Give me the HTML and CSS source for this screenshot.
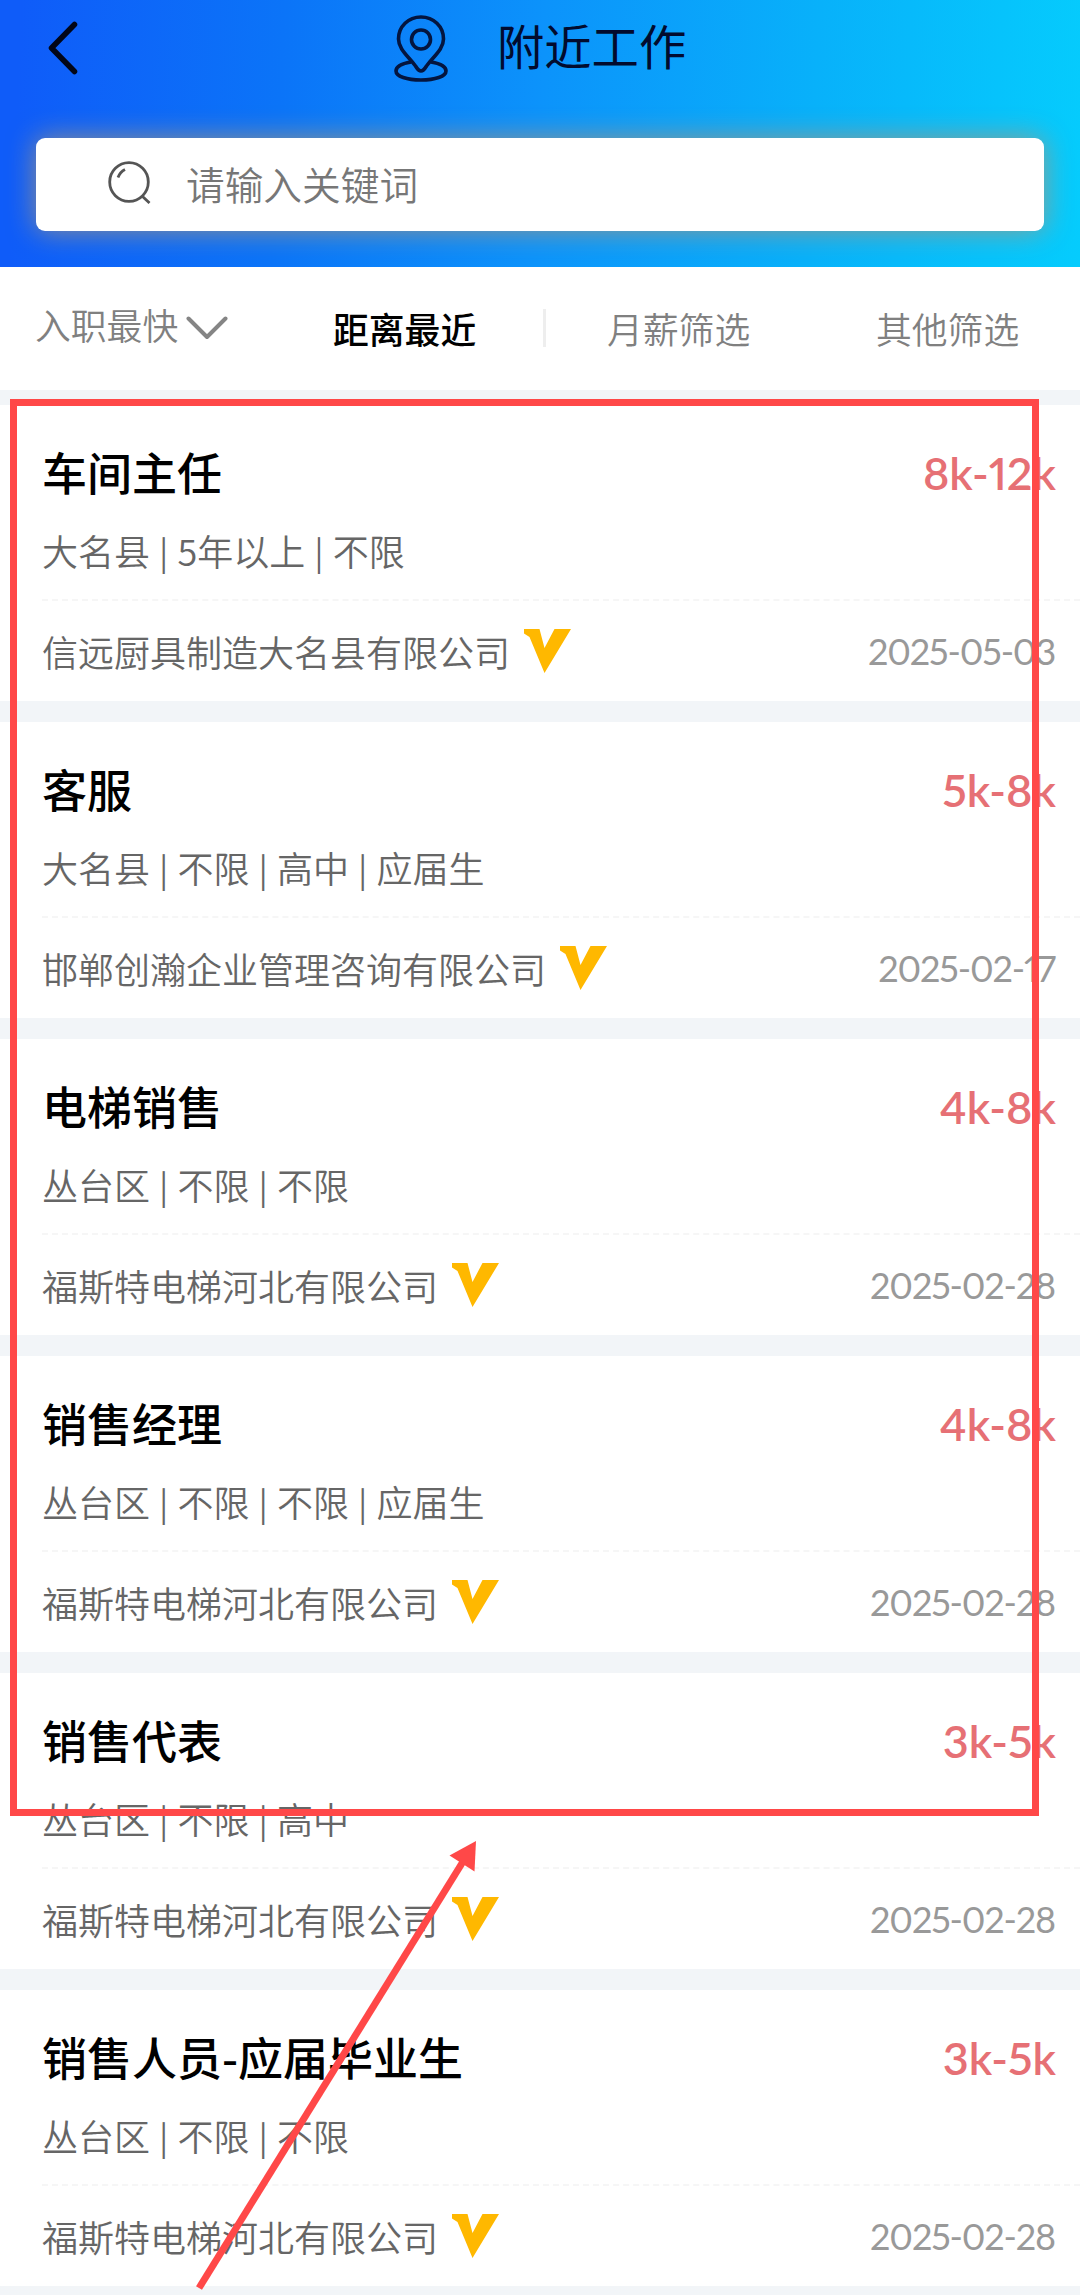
FILE: index.html
```html
<!DOCTYPE html>
<html lang="zh-CN">
<head>
<meta charset="utf-8">
<title>附近工作</title>
<link rel="stylesheet" href="styles.css">
</head>
<body>
<svg class="defs" width="0" height="0" aria-hidden="true">
  <symbol id="verified" viewBox="0 0 47 44"><path d="M0 0H15.500L20.500 19L30.500 0H47L20.500 44L5.500 8L0 4.500Z" fill="#ffb800"/></symbol>
</svg>
<div class="screen">
  <header class="header">
    <div class="titlebar">
      <svg class="back" viewBox="0 0 30 54"><path d="M26.500 3.500L3.500 27L26.500 50.500" fill="none" stroke="#020617" stroke-width="5.500" stroke-linecap="round" stroke-linejoin="round"/></svg>
      <div class="heading">
        <svg class="pin" viewBox="0 0 54 67" fill="none" stroke="#04153f" stroke-width="3.600" stroke-linejoin="round"><path d="M27 56C24.500 56 23 53.500 21.500 51C14 41 4.500 34 4.500 24C4.500 11.500 14.500 2 27 2S49.500 11.500 49.500 24C49.500 34 40 41 32.500 51C31 53.500 29.500 56 27 56Z"/><circle cx="27" cy="24.500" r="9.500"/><path d="M17 47C8 48.500 2 51.500 2 56C2 61.500 13 65 27 65S52 61.500 52 56C52 51.500 46 48.500 37 47"/></svg>
        <h1 class="title">附近工作</h1>
      </div>
    </div>
    <div class="search">
      <svg class="glass" viewBox="0 0 43 43" fill="none" stroke="#555" stroke-width="2.800"><circle cx="21" cy="21" r="19.300"/><path d="M34 35L41.500 42M10 16.500Q12 11 17 8.500"/></svg>
      <span class="placeholder">请输入关键词</span>
    </div>
  </header>
  <nav class="tabs">
    <div class="tab tab-sort">入职最快<svg class="chevron" viewBox="0 0 42 24"><path d="M2.500 2.500L21 21L39.500 2.500" fill="none" stroke="#858585" stroke-width="4" stroke-linecap="round" stroke-linejoin="round"/></svg></div>
    <div class="tab tab-active">距离最近</div>
    <div class="divider"></div>
    <div class="tab tab-salary">月薪筛选</div>
    <div class="tab">其他筛选</div>
  </nav>
  <main class="list">
    <article class="card">
      <div class="row"><h2 class="job">车间主任</h2><span class="salary">8k-12k</span></div>
      <p class="meta">大名县<i>|</i>5年以上<i>|</i>不限</p>
      <div class="foot"><span class="company">信远厨具制造大名县有限公司</span><svg class="badge"><use href="#verified"/></svg><time class="date">2025-05-03</time></div>
    </article>
    <article class="card">
      <div class="row"><h2 class="job">客服</h2><span class="salary">5k-8k</span></div>
      <p class="meta">大名县<i>|</i>不限<i>|</i>高中<i>|</i>应届生</p>
      <div class="foot"><span class="company">邯郸创瀚企业管理咨询有限公司</span><svg class="badge"><use href="#verified"/></svg><time class="date">2025-02-17</time></div>
    </article>
    <article class="card">
      <div class="row"><h2 class="job">电梯销售</h2><span class="salary">4k-8k</span></div>
      <p class="meta">丛台区<i>|</i>不限<i>|</i>不限</p>
      <div class="foot"><span class="company">福斯特电梯河北有限公司</span><svg class="badge"><use href="#verified"/></svg><time class="date">2025-02-28</time></div>
    </article>
    <article class="card">
      <div class="row"><h2 class="job">销售经理</h2><span class="salary">4k-8k</span></div>
      <p class="meta">丛台区<i>|</i>不限<i>|</i>不限<i>|</i>应届生</p>
      <div class="foot"><span class="company">福斯特电梯河北有限公司</span><svg class="badge"><use href="#verified"/></svg><time class="date">2025-02-28</time></div>
    </article>
    <article class="card">
      <div class="row"><h2 class="job">销售代表</h2><span class="salary">3k-5k</span></div>
      <p class="meta">丛台区<i>|</i>不限<i>|</i>高中</p>
      <div class="foot"><span class="company">福斯特电梯河北有限公司</span><svg class="badge"><use href="#verified"/></svg><time class="date">2025-02-28</time></div>
    </article>
    <article class="card">
      <div class="row"><h2 class="job">销售人员-应届毕业生</h2><span class="salary">3k-5k</span></div>
      <p class="meta">丛台区<i>|</i>不限<i>|</i>不限</p>
      <div class="foot"><span class="company">福斯特电梯河北有限公司</span><svg class="badge"><use href="#verified"/></svg><time class="date">2025-02-28</time></div>
    </article>
  </main>
  <svg class="annotation" viewBox="0 0 1080 2295">
    <rect x="13.500" y="402.500" width="1022" height="1410" fill="none" stroke="#ff4848" stroke-width="7"/>
    <path d="M199 2288L464 1860" stroke="#ff4848" stroke-width="7"/>
    <path d="M476 1841L449.500 1855.500L474.500 1871.500Z" fill="#ff4848"/>
  </svg>
</div>
</body>
</html>
```
FILE: styles.css
```css
* { box-sizing: border-box; margin: 0; padding: 0; }
body {
  width: 1080px;
  height: 2295px;
  overflow: hidden;
  background: #f2f5f8;
  font-family: "Noto Sans CJK SC", sans-serif;
  font-weight: 350;
}
svg { display: block; flex: none; }
.defs { position: absolute; }
.screen { position: relative; width: 1080px; height: 2295px; overflow: hidden; }

.header {
  height: 267px;
  padding: 0 36px;
  background: linear-gradient(93deg, #0f5cf9 2%, #0b74f8 26%, #0c93fb 50%, #08b1fa 75%, #05ccfd 100%);
}
.titlebar { display: flex; align-items: flex-start; height: 138px; padding: 15px 0 0 12px; }
.back { width: 30px; height: 54px; margin-top: 6px; }
.heading { display: flex; margin-left: 316px; gap: 49px; }
.pin { width: 54px; height: 67px; }
.title { font-size: 47.300px; line-height: 60px; font-weight: 400; color: #020b2e; }
.search {
  display: flex;
  align-items: center;
  height: 93px;
  padding: 0 71px 4px;
  gap: 35px;
  border-radius: 9px;
  background: #fff;
  box-shadow: 0 0 28px rgba(170, 150, 125, .85);
}
.glass { width: 43px; height: 43px; margin-left: 1px; }
.placeholder { font-size: 38.700px; line-height: 50px; color: #777; }

.tabs {
  display: flex;
  align-items: center;
  height: 123px;
  padding: 0 35px 1px;
  background: #fff;
  font-size: 35.800px;
  line-height: 48px;
  color: #808080;
}
.tab { display: flex; white-space: nowrap; }
.tab-sort { width: 298px; padding-bottom: 8px; }
.chevron { width: 42px; height: 24px; margin: 16px 0 0 8px; }
.tab-active { width: 210px; font-weight: 500; color: #000; }
.divider { width: 3px; height: 38px; background: #eee; }
.tab-salary { margin-left: 61px; width: 269px; }

.list { display: flex; flex-direction: column; gap: 21px; padding-top: 15px; }
.card { flex: none; height: 296px; padding: 42px 0 0 42px; background: #fff; }
.row { display: flex; justify-content: space-between; padding-right: 24px; height: 50px; line-height: 50px; }
.job { font-size: 45px; font-weight: 500; color: #000; }
.salary {
  padding-top: 1px;
  font-family: Lato, sans-serif;
  font-weight: 600;
  font-size: 45px;
  font-variant-numeric: proportional-nums;
  color: #e67075;
}
.meta { margin-top: 28px; height: 50px; font-size: 36px; line-height: 50px; color: #666; }
.meta i {
  display: inline-block;
  width: 27.500px;
  font-size: 33px;
  font-weight: 400;
  font-style: normal;
  text-align: center;
  vertical-align: 1px;
  line-height: 1;
}
.foot {
  display: flex;
  align-items: center;
  height: 101px;
  margin-top: 24px;
  padding-right: 24px;
  border-top: 2px dashed #f6f6f6;
}
.company { font-size: 36px; line-height: 50px; color: #666; }
.badge { width: 47px; height: 44px; margin-left: 14px; }
.date {
  margin: 0 1px 0 auto;
  font-family: Lato, sans-serif;
  font-weight: 400;
  font-size: 36px;
  letter-spacing: -1.150px;
  font-variant-numeric: proportional-nums;
  color: #999;
}

.annotation { position: absolute; inset: 0; width: 1080px; height: 2295px; }
```
